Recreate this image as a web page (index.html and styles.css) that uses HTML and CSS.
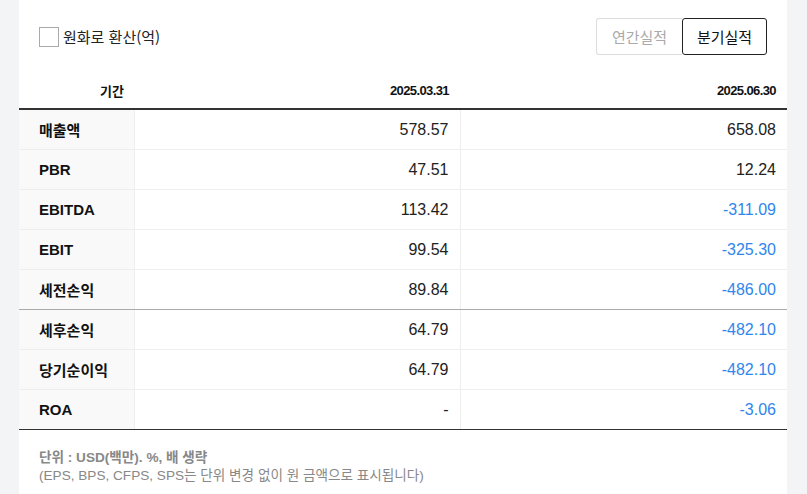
FILE: index.html
```html
<!DOCTYPE html>
<html lang="ko">
<head>
<meta charset="utf-8">
<link rel="stylesheet" href="styles.css">
</head>
<body>
<div class="page">
  <div class="topbar">
    <label class="check">
      <span class="box"></span>
      <span class="check-text">원화로 환산(억)</span>
    </label>
    <div class="toggle">
      <button class="tbtn">연간실적</button>
      <button class="tbtn active">분기실적</button>
    </div>
  </div>
  <table class="fin">
    <colgroup>
      <col class="c1"><col class="c2"><col class="c3">
    </colgroup>
    <thead>
      <tr><th>기간</th><th>2025.03.31</th><th>2025.06.30</th></tr>
    </thead>
    <tbody>
      <tr><td class="lbl">매출액</td><td>578.57</td><td>658.08</td></tr>
      <tr><td class="lbl">PBR</td><td>47.51</td><td>12.24</td></tr>
      <tr><td class="lbl">EBITDA</td><td>113.42</td><td class="neg">-311.09</td></tr>
      <tr><td class="lbl">EBIT</td><td>99.54</td><td class="neg">-325.30</td></tr>
      <tr class="group-end"><td class="lbl">세전손익</td><td>89.84</td><td class="neg">-486.00</td></tr>
      <tr><td class="lbl">세후손익</td><td>64.79</td><td class="neg">-482.10</td></tr>
      <tr><td class="lbl">당기순이익</td><td>64.79</td><td class="neg">-482.10</td></tr>
      <tr><td class="lbl">ROA</td><td>-</td><td class="neg">-3.06</td></tr>
    </tbody>
  </table>
  <div class="note">
    <p class="unit">단위 : USD(백만). %, 배 생략</p>
    <p class="sub">(EPS, BPS, CFPS, SPS는 단위 변경 없이 원 금액으로 표시됩니다)</p>
  </div>
</div>
</body>
</html>
```
FILE: styles.css
```css
html, body {
  margin: 0;
  padding: 0;
}
body {
  background: #f3f4f6;
  font-family: "Liberation Sans", Arial, "Noto Sans CJK KR", sans-serif;
  color: #111;
}
.page {
  background: #fff;
  margin: 0 20px 0 19px;
  height: 494px;
  overflow: hidden;
}
.topbar {
  display: flex;
  justify-content: space-between;
  align-items: center;
  padding: 18px 20px 0 20px;
  height: 37px;
}
.check {
  display: flex;
  align-items: center;
  gap: 4px;
  font-size: 15px;
  color: #222;
}
.box {
  width: 18px;
  height: 18px;
  border: 1px solid #aaa;
  background: #fff;
}
.check-text {
  font-family: "Noto Sans CJK KR", sans-serif;
}
.toggle {
  display: flex;
  height: 37px;
}
.tbtn {
  font-family: "Noto Sans CJK KR", sans-serif;
  font-size: 15px;
  background: #fff;
  border: 1px solid #ddd;
  border-radius: 3px;
  color: #aaa;
  width: 86px;
  height: 37px;
  padding: 0;
  margin: 0;
}
.tbtn:first-child {
  border-right: none;
  border-radius: 3px 0 0 3px;
}
.tbtn.active {
  border: 1px solid #222;
  color: #111;
  width: 85px;
}
.fin {
  width: 100%;
  border-collapse: collapse;
  table-layout: fixed;
  margin-top: 17px;
}
.c1 { width: 115px; }
.c2 { width: 326px; }
.fin th {
  height: 36px;
  padding: 0 11px 0 0;
  text-align: right;
  font-size: 13px;
  letter-spacing: -0.6px;
  font-weight: bold;
  color: #111;
  border-bottom: 2px solid #333;
}
.fin th:first-child {
  letter-spacing: 0;
  padding-right: 10px;
  font-family: "Noto Sans CJK KR", sans-serif;
}
.fin td {
  height: 39px;
  padding: 0 11px 0 0;
  text-align: right;
  font-size: 16px;
  color: #222;
  border-bottom: 1px solid #eee;
  border-right: 1px solid #eee;
}
.fin td:last-child {
  border-right: none;
}
.fin td.lbl {
  text-align: left;
  padding: 0 0 0 20px;
  background: #f9f9f9;
  font-weight: bold;
  font-size: 15px;
  color: #111;
}
.fin td.neg {
  color: #2f86ec;
}
.fin tr.group-end td {
  border-bottom: 1px solid #aaa;
}
.fin tbody tr:last-child td {
  border-bottom: 1px solid #333;
}
.note {
  padding: 19px 20px 0 20px;
  font-size: 13.6px;
  color: #888;
  line-height: 18px;
}
.note p {
  margin: 0;
}
.unit {
  font-weight: bold;
}
```
